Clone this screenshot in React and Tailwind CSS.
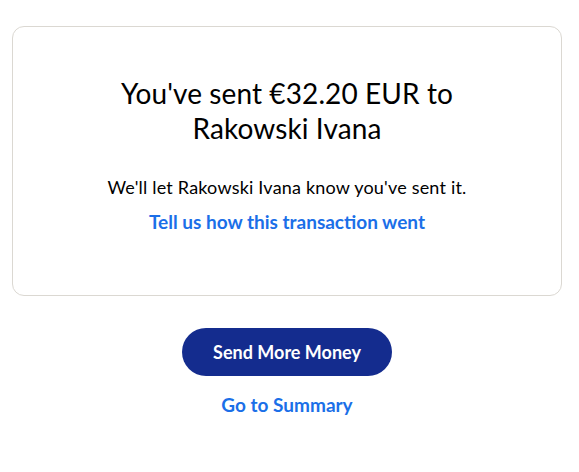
export default function App() {
  return (
    <div className="w-[579px] h-[472px] bg-white" style={{ fontFamily: 'Lato, "Open Sans", sans-serif' }}>
      <div className="pt-[26px] pl-[12px]">
        <div className="w-[550px] h-[270px] rounded-[12px] border border-[#dbd8d2] flex flex-col items-center pt-[49px]">
          <h1 className="text-[28px] leading-[35px] text-[#000] text-center w-[380px] tracking-[0.1px]">
            You've sent €32.20 EUR to Rakowski Ivana
          </h1>
          <p className="mt-[30px] text-[18px] leading-[22px] tracking-[0.2px] text-[#000]">
            We'll let Rakowski Ivana know you've sent it.
          </p>
          <a className="mt-[12px] text-[19px] leading-[24px] font-bold text-[#1b6fe8]">
            Tell us how this transaction went
          </a>
        </div>
      </div>
      <div className="flex flex-col items-center mt-[32px] pr-[5px]">
        <button className="w-[210px] h-[48px] rounded-full bg-[#142c8e] text-white text-[18px] font-bold">
          Send More Money
        </button>
        <a className="mt-[17px] text-[19px] leading-[24px] font-bold text-[#1b6fe8]">Go to Summary</a>
      </div>
    </div>
  );
}
